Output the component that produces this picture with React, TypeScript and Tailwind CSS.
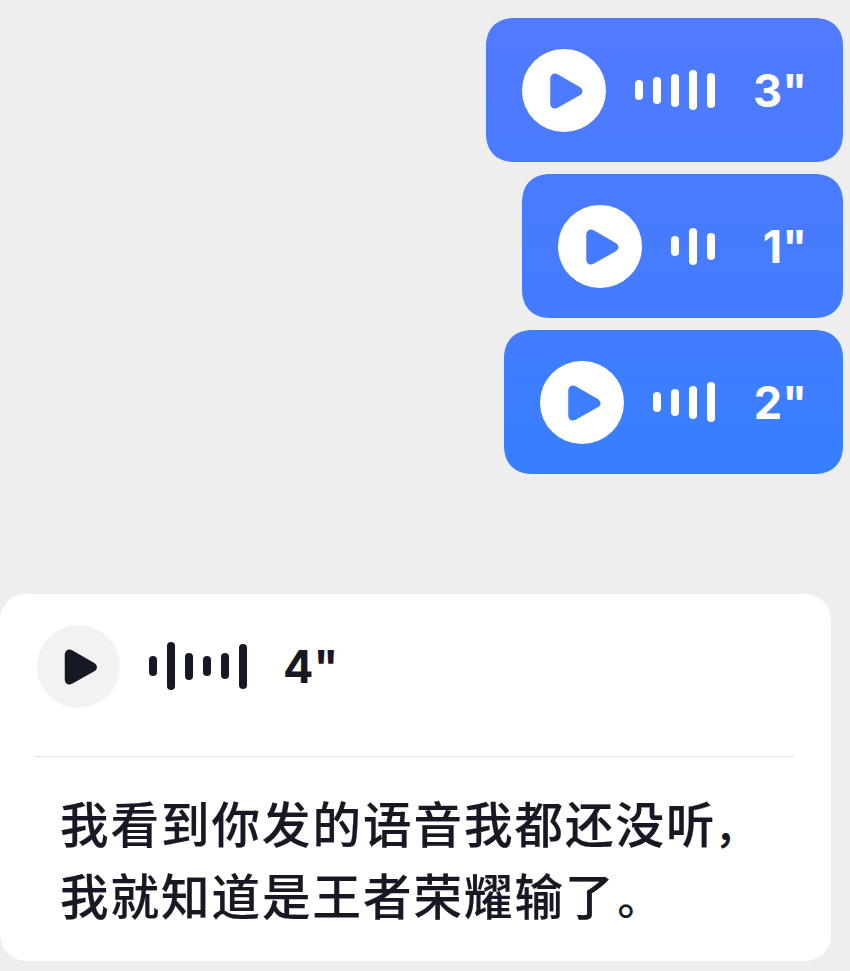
import React from "react";
import clsx from "clsx";

type VoiceProps = {
  bars: number[];
  seconds: number;
  dark?: boolean;
  iconClass: string;
};

const sent = [
  {
    bars: [20, 27, 33, 40, 35],
    seconds: 3,
    width: "w-[357px]",
    bg: "bg-linear-to-b from-[#517aff] to-[#4a7bff]",
    iconClass: "text-[#4e7aff]",
  },
  {
    bars: [20, 37, 27],
    seconds: 1,
    width: "w-[321px]",
    bg: "bg-linear-to-b from-[#4a7bff] to-[#437cff]",
    iconClass: "text-[#467bff]",
  },
  {
    bars: [20, 27, 33, 40],
    seconds: 2,
    width: "w-[339px]",
    bg: "bg-linear-to-b from-[#427cff] to-[#367fff]",
    iconClass: "text-[#3d7dff]",
  },
];

const PlayIcon = ({ className }: { className: string }) => (
  <svg viewBox="1 0.5 82 82" className={clsx("h-full w-full", className)}>
    <path
      d="M28.4 30.4 V53.6 C28.4 58.2 31.8 60.8 35.7 58.6 L57.6 46.2 C61.1 44.1 61.1 40.1 57.6 38 L35.7 25.4 C31.8 23.2 28.4 25.8 28.4 30.4 Z"
      fill="currentColor"
    />
  </svg>
);

const Voice = ({ bars, seconds, dark, iconClass }: VoiceProps) => (
  <>
    <div
      className={clsx(
        "mt-px h-[83px] shrink-0 rounded-full",
        dark ? "w-[83px] bg-[#f2f2f4]" : "w-[84px] bg-white"
      )}
    >
      <PlayIcon className={iconClass} />
    </div>
    <div className="ml-[29px] flex items-center gap-2.5">
      {bars.map((height, i) => (
        <span
          key={i}
          className={clsx("w-2 rounded-full", dark ? "bg-[#161823]" : "bg-white")}
          style={{ height }}
        />
      ))}
    </div>
    <span
      className={clsx(
        "text-[45px] leading-none font-bold",
        dark ? "ml-[36px] text-[#161823]" : "ml-auto text-white"
      )}
    >
      {seconds}"
    </span>
  </>
);

export default function App() {
  return (
    <div className="flex h-[971px] w-[850px] flex-col overflow-hidden bg-[#eeeeee] pt-[18px] font-['Inter','Noto_Sans_CJK_SC',sans-serif]">
      {/* sent messages */}
      <div className="flex flex-col items-end gap-3 pr-[7px]">
        {sent.map(({ width, bg, ...voice }) => (
          <div
            key={voice.seconds}
            className={clsx(
              "flex h-36 items-center rounded-[29px] pr-9 pl-9 [corner-shape:superellipse(1.2)]",
              width,
              bg
            )}
          >
            <Voice {...voice} />
          </div>
        ))}
      </div>

      {/* received message with transcript */}
      <div className="mt-[120px] h-[367px] w-[831px] rounded-[29px] bg-white px-9 [corner-shape:superellipse(1.2)]">
        <div className="flex h-[163px] items-start border-b border-[#e0e0e1] pl-px">
          <div className="flex h-36 items-center">
            <Voice bars={[20, 48, 27, 20, 26, 45]} seconds={4} dark iconClass="text-[#161823]" />
          </div>
        </div>
        <p className="pt-[29px] pl-6 font-['Noto_Sans_CJK_SC',sans-serif] text-[48.5px] leading-[72px] font-medium tracking-[2px] whitespace-nowrap text-[#161823] [-webkit-text-stroke:0.2px_#161823]">
          我看到你发的语音我都还没听<span className="-ml-0.5 text-[43px] leading-none">，</span>
          <br />
          我就知道是王者荣耀输了<span className="ml-0.5 text-[43px] leading-none">。</span>
        </p>
      </div>
    </div>
  );
}
